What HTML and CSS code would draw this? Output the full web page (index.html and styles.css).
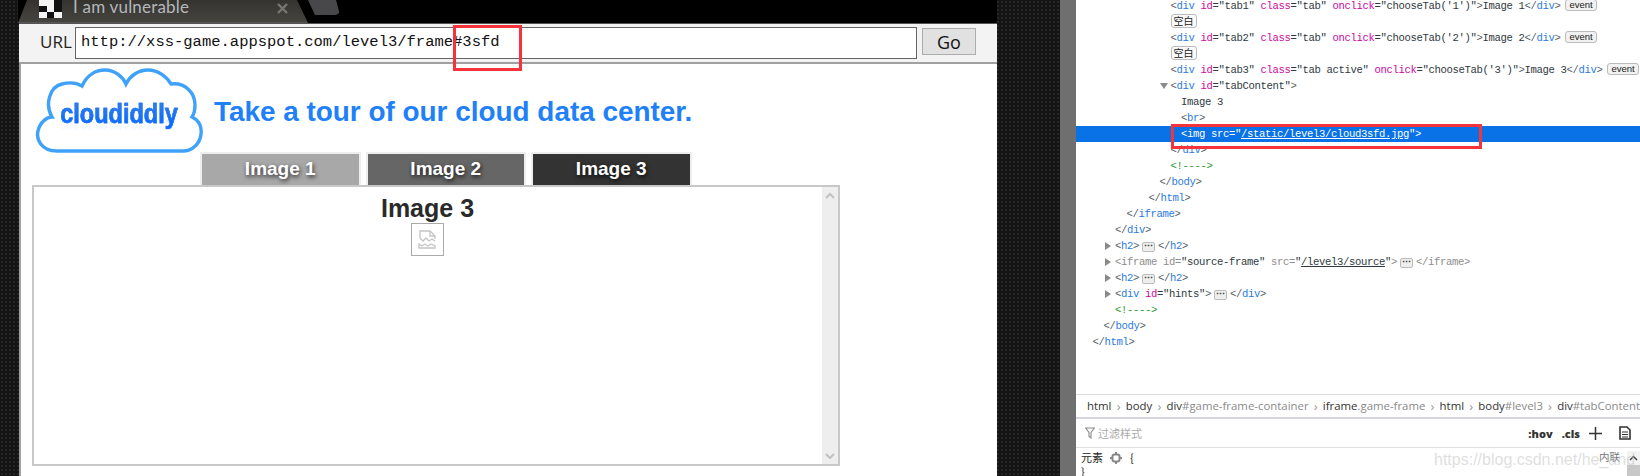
FILE: index.html
```html
<!DOCTYPE html>
<html lang="zh">
<head>
<meta charset="utf-8">
<title>I am vulnerable</title>
<link rel="stylesheet" href="styles.css">
</head>
<body>
<div class="screen">
  <main class="browser">
    <div class="tabstrip">
      <div class="btab">
        <span class="favicon"><i></i><i></i><i class="off"></i><i class="off"></i><i></i><i class="off"></i><i></i><i class="off"></i><i></i></span>
        <span class="btab-title">I am vulnerable</span>
        <svg class="btab-close" width="11" height="11" viewBox="0 0 11 11"><path d="M1 1l9 9M10 1l-9 9" stroke="#77776f" stroke-width="2.4"/></svg>
      </div>
      <div class="newtab"></div>
    </div>
    <div class="urlbar">
      <span class="url-label">URL</span>
      <div class="url-input">http://xss-game.appspot.com/level3/frame#3sfd</div>
      <button class="go">Go</button>
    </div>
    <div class="frame">
      <header class="head">
        <div class="logo">
          <svg class="cloud" width="170" height="90" viewBox="0 0 170 90">
            <path d="M22 84 C6 84 1 72 3 64 C5 55 12 50 17 50 C10 38 14 20 27 17 C35 15 42 16 47 19 C52 8 61 3 70 3 C80 3 88 10 91 17 C95 9 103 3 113 3 C123 3 132 10 136 17 C150 15 160 26 160 38 C160 43 159 47 157 50 C164 53 167 60 166 67 C165 77 157 84 148 84 Z" fill="#fff" stroke="#3ea2fb" stroke-width="3.4"/>
          </svg>
          <span class="logo-text">cloudiddly</span>
        </div>
        <h1 class="title">Take a tour of our cloud data center.</h1>
      </header>
      <nav class="tabs">
        <div class="tab t1">Image 1</div>
        <div class="tab t2">Image 2</div>
        <div class="tab t3">Image 3</div>
      </nav>
      <section class="content">
        <div class="content-body">
          <div class="img-title">Image 3</div>
          <div class="broken">
            <svg width="19" height="19" viewBox="0 0 19 19" fill="none" stroke="#c4c4c4" stroke-width="1.3">
              <path d="M2 8V1h10l5 5v3"/><path d="M12 1v5h5"/><path d="M2 8l3 3 3-3 3 3 3-2 3 2" />
              <path d="M1 14l3 2 3-2 3 2 3-2 4 2v2H1z"/>
            </svg>
          </div>
        </div>
        <div class="vscroll">
          <svg width="10" height="7" viewBox="0 0 10 7"><path d="M1 6l4-4 4 4" fill="none" stroke="#c2c2c2" stroke-width="2"/></svg>
          <svg width="10" height="7" viewBox="0 0 10 7"><path d="M1 1l4 4 4-4" fill="none" stroke="#c2c2c2" stroke-width="2"/></svg>
        </div>
      </section>
    </div>
    <div class="redbox url-mark"></div>
  </main>
  <div class="pattern-gap"></div>
  <div class="gutter"></div>
  <aside class="devtools">
    <div class="tree">
      <div class="ln i3"><span class="p">&lt;</span><span class="t">div</span> <span class="a">id</span>=<span class="v">"tab1"</span> <span class="a">class</span>=<span class="v">"tab"</span> <span class="a">onclick</span>=<span class="v">"chooseTab('1')"</span><span class="p">&gt;</span>Image 1<span class="p">&lt;/</span><span class="t">div</span><span class="p">&gt;</span><span class="pill ev">event</span></div>
      <div class="ln i3"><span class="pill cj">空白</span></div>
      <div class="ln i3"><span class="p">&lt;</span><span class="t">div</span> <span class="a">id</span>=<span class="v">"tab2"</span> <span class="a">class</span>=<span class="v">"tab"</span> <span class="a">onclick</span>=<span class="v">"chooseTab('2')"</span><span class="p">&gt;</span>Image 2<span class="p">&lt;/</span><span class="t">div</span><span class="p">&gt;</span><span class="pill ev">event</span></div>
      <div class="ln i3"><span class="pill cj">空白</span></div>
      <div class="ln i3"><span class="p">&lt;</span><span class="t">div</span> <span class="a">id</span>=<span class="v">"tab3"</span> <span class="a">class</span>=<span class="v">"tab active"</span> <span class="a">onclick</span>=<span class="v">"chooseTab('3')"</span><span class="p">&gt;</span>Image 3<span class="p">&lt;/</span><span class="t">div</span><span class="p">&gt;</span><span class="pill ev">event</span></div>
      <div class="ln i3"><b class="tri down"></b><span class="p">&lt;</span><span class="t">div</span> <span class="a">id</span>=<span class="v">"tabContent"</span><span class="p">&gt;</span></div>
      <div class="ln i4">Image 3</div>
      <div class="ln i4"><span class="p">&lt;</span><span class="t">br</span><span class="p">&gt;</span></div>
      <div class="ln i4 sel">&lt;img src="<u>/static/level3/cloud3sfd.jpg</u>"&gt;</div>
      <div class="ln i3"><span class="p">&lt;/</span><span class="t">div</span><span class="p">&gt;</span></div>
      <div class="ln i3 c">&lt;!----&gt;</div>
      <div class="ln i2b"><span class="p">&lt;/</span><span class="t">body</span><span class="p">&gt;</span></div>
      <div class="ln i2"><span class="p">&lt;/</span><span class="t">html</span><span class="p">&gt;</span></div>
      <div class="ln i1b"><span class="p">&lt;/</span><span class="t">iframe</span><span class="p">&gt;</span></div>
      <div class="ln i1"><span class="p">&lt;/</span><span class="t">div</span><span class="p">&gt;</span></div>
      <div class="ln i1"><b class="tri"></b><span class="p">&lt;</span><span class="t">h2</span><span class="p">&gt;</span><span class="dots">⋯</span><span class="p">&lt;/</span><span class="t">h2</span><span class="p">&gt;</span></div>
      <div class="ln i1 dim"><b class="tri"></b><span class="p">&lt;</span>iframe id=<span class="v">"source-frame"</span> src=<span class="v">"<u>/level3/source</u>"</span><span class="p">&gt;</span><span class="dots">⋯</span><span class="p">&lt;/</span>iframe<span class="p">&gt;</span></div>
      <div class="ln i1"><b class="tri"></b><span class="p">&lt;</span><span class="t">h2</span><span class="p">&gt;</span><span class="dots">⋯</span><span class="p">&lt;/</span><span class="t">h2</span><span class="p">&gt;</span></div>
      <div class="ln i1"><b class="tri"></b><span class="p">&lt;</span><span class="t">div</span> <span class="a">id</span>=<span class="v">"hints"</span><span class="p">&gt;</span><span class="dots">⋯</span><span class="p">&lt;/</span><span class="t">div</span><span class="p">&gt;</span></div>
      <div class="ln i1 c">&lt;!----&gt;</div>
      <div class="ln i0b"><span class="p">&lt;/</span><span class="t">body</span><span class="p">&gt;</span></div>
      <div class="ln i0"><span class="p">&lt;/</span><span class="t">html</span><span class="p">&gt;</span></div>
    </div>
    <div class="crumbs">
      <span>html</span><em>›</em><span>body</span><em>›</em><span>div<small>#game-frame-container</small></span><em>›</em><span>iframe<small>.game-frame</small></span><em>›</em><span>html</span><em>›</em><span>body<small>#level3</small></span><em>›</em><span>div<small>#tabContent</small></span>
    </div>
    <div class="filter">
      <svg width="10" height="12" viewBox="0 0 10 12"><path d="M.7 1h8.600L6 5.500V11L4 9.500V5.500z" fill="none" stroke="#8a8a8a" stroke-width="1.100"/></svg>
      <span class="filter-text">过滤样式</span>
      <span class="filter-tools">
        <b>:hov</b><b>.cls</b>
        <svg width="13" height="13" viewBox="0 0 13 13"><path d="M6.500 0v13M0 6.500h13" stroke="#333" stroke-width="1.500"/></svg>
        <svg width="12" height="14" viewBox="0 0 12 14"><path d="M1 1h7l3 3v9H1z" fill="none" stroke="#333" stroke-width="1.600"/><path d="M3 6h6M3 8.500h6M3 11h6" stroke="#333"/></svg>
      </span>
    </div>
    <div class="styles">
      <div class="rule">
        <div>元素 <svg class="gear" width="12" height="12" viewBox="0 0 12 12"><rect x="2.500" y="2.500" width="7" height="7" rx="2" fill="none" stroke="#888" stroke-width="2"/><path d="M6 0v2M6 10v2M0 6h2M10 6h2" stroke="#888" stroke-width="2"/></svg> {</div>
        <div>}</div>
      </div>
      <span class="inline-tag">内联</span>
      <div class="dscroll"><svg width="9" height="6" viewBox="0 0 9 6"><path d="M1 5l3.500-3.500L8 5" fill="none" stroke="#444" stroke-width="1.500"/></svg><i></i></div>
      <span class="watermark">https://blog.csdn.net/he_and</span>
    </div>
    <div class="redbox sel-mark"></div>
  </aside>
</div>
</body>
</html>
```
FILE: styles.css
```css
* { box-sizing: border-box; }
html, body { margin: 0; height: 100%; overflow: hidden; }
body { font-family: "Liberation Sans", Arial, sans-serif; }

.screen {
  display: flex;
  width: 1640px;
  height: 476px;
  overflow: hidden;
  background-color: #141414;
  background-image: radial-gradient(circle at 2px 2px, #262626 1px, transparent 1.400px);
  background-size: 4px 4px;
}

/* browser-in-browser */
.browser { position: relative; width: 979px; margin-left: 18px; flex: none; display: flex; flex-direction: column; }
.tabstrip { height: 23px; background: #000; display: flex; flex: none; }
.btab {
  width: 290px; height: 23px; background: linear-gradient(#34332f, #45443f);
  clip-path: polygon(0 100%, 9px 0, 279px 0, 290px 100%);
  display: flex; align-items: flex-start; flex: none; position: relative;
  border-bottom: 1px solid #555;
}
.favicon { display: grid; grid-template-columns: repeat(3, 7.500px); grid-auto-rows: 6px; margin: 0 0 0 21px; width: 23px; }
.favicon i { background: #f4f4f4; }
.favicon i.off { background: #111; }
.btab-title { color: #b3b7bb; font: 17px/14px "Lato", "Noto Sans", sans-serif; margin-left: 11px; height: 20px; width: 206px; letter-spacing: .2px; }
.btab-close { margin: 3px 0 0 -2px; }
.newtab { width: 32px; height: 15px; background: #48484a; margin-left: 0; border-radius: 0 0 5px 8px; clip-path: polygon(0 0, 28px 0, 32px 100%, 7px 100%); }

.urlbar {
  height: 41px; flex: none; display: flex; align-items: flex-start;
  background: #f3f3f3; border-bottom: 2px solid #a0a0a0; border-top: 1px solid #555;
  margin-left: 1px; padding: 3px 0 0 21px;
}
.url-label { width: 35px; font: 17px/30px "Open Sans", sans-serif; color: #222; }
.url-input {
  width: 842px; height: 32px; background: #fff; border: 1px solid #666; border-bottom-width: 1.500px;
  font: 15.500px/29px "Liberation Mono", monospace; color: #111; padding-left: 5px;
}
.go {
  width: 54px; height: 27px; margin: 1px 0 0 5px; padding: 0;
  background: #e1e1e1; border: 1px solid #adadad;
  font: 18px/24px "Open Sans", sans-serif; color: #111;
}

.frame { flex: 1; margin-left: 1px; background: #fff; border-left: 2px solid #a0a0a0; padding: 0 0 0 11px; display: flex; flex-direction: column; position: relative; }
.head { height: 88px; display: flex; align-items: flex-start; flex: none; }
.logo { position: relative; width: 170px; height: 88px; margin: 3px 0 0 3px; flex: none; }
.cloud { display: block; }
.logo-text {
  position: absolute; left: -10px; right: -8px; top: 32px; text-align: center;
  font: bold 27px/30px "Liberation Sans", sans-serif; transform: scaleX(.87);
  background: linear-gradient(#2a7cee 25%, #0a6cff 80%); -webkit-background-clip: text; background-clip: text; color: transparent;
  -webkit-text-stroke: .5px #1a6cf0;
  -webkit-box-reflect: below -9px linear-gradient(transparent 62%, rgba(0,0,0,.12));
}
.title { margin: 32px 0 0 9px; font: bold 27.900px/32px "Liberation Sans", sans-serif; color: #2080f8; white-space: nowrap; }

.tabs { display: flex; gap: 5px; margin-left: 168px; height: 33px; flex: none; }
.tab { width: 160.500px; height: 34px; border: 2px solid #eee; border-bottom: 0; color: #fff; font: bold 19px/30px "Liberation Sans", sans-serif; text-align: center; text-shadow: 1px 2px 4px rgba(0,0,0,.75); }
.tab.t1 { background: #a8a8a8; }
.tab.t2 { background: #666; }
.tab.t3 { background: #333; }

.content { width: 808px; height: 281px; border: 2px solid #c8c8c8; background: #fff; display: flex; flex: none; position: relative; }
.content-body { flex: 1; display: flex; flex-direction: column; align-items: center; padding-right: 1px; }
.img-title { font: bold 25px/28px "Liberation Sans", sans-serif; color: #2a2a2a; margin-top: 7px; }
.broken { width: 33px; height: 33px; border: 1px solid #aaa; margin-top: 1px; display: flex; align-items: center; justify-content: center; }
.vscroll { width: 16px; background: #eee; display: flex; flex-direction: column; justify-content: space-between; align-items: center; padding: 5px 0 4px; }
.vscroll svg { display: block; }

.redbox { position: absolute; border: 3px solid #f5333a; pointer-events: none; }
.url-mark { left: 435px; top: 25px; width: 69px; height: 46px; }
.sel-mark { left: 95px; top: 124px; width: 311px; height: 25px; }

.pattern-gap { width: 63px; flex: none; }
.gutter { width: 16px; background: #6f6f6f; flex: none; }

/* devtools */
.devtools { width: 564px; flex: none; background: #fff; position: relative; display: flex; flex-direction: column; overflow: hidden; }
.tree { height: 394px; flex: none; padding-top: 0; margin-top: -2px; font: 10.600px/17px "Liberation Mono", monospace; letter-spacing: -.36px; color: #303942; white-space: nowrap; }
.ln { height: 16px; position: relative; }
.i0 { padding-left: 16.500px; } .i0b { padding-left: 27.500px; }
.i1 { padding-left: 39px; } .i1b { padding-left: 50.500px; }
.i2 { padding-left: 72.500px; } .i2b { padding-left: 83.500px; }
.i3 { padding-left: 94.500px; } .i4 { padding-left: 105px; }
.p { color: #5a5f66; }
.t { color: #2a7ae2; }
.a { color: #c80a9e; }
.v { color: #303942; }
.c { color: #2c9a2c; }
.dim, .dim .p { color: #8d8d8d; }
.ln.sel { background: #0872e6; color: #fff; }
.tri { position: absolute; top: 4px; margin-left: -10px; width: 0; height: 0; border-style: solid; border-width: 4px 0 4px 6px; border-color: transparent transparent transparent #8a8a8a; }
.tri.down { border-width: 6px 4px 0; border-color: #8a8a8a transparent transparent; margin-left: -11px; top: 5px; }
.pill { display: inline-block; border: 1px solid #bbb; border-radius: 3px; background: #f1f1f1; font: 9px/10px "Liberation Sans", sans-serif; letter-spacing: 0; color: #222; padding: 0 2px; height: 12px; vertical-align: 1px; }
.pill.ev { margin-left: 5px; padding: 0 3px; font-size: 9.500px; }
.pill.cj { font: 10px/11px "Noto Sans CJK SC", sans-serif; padding: 0 2px; height: 14px; background: #fafafa; }
.dots { display: inline-block; width: 13px; height: 10px; margin: 0 3px; border: 1px solid #bbb; border-radius: 2px; background: #eee; font: bold 9px/7px "Liberation Sans", sans-serif; letter-spacing: 0; text-align: center; color: #333; vertical-align: 0; }

.crumbs { height: 25px; flex: none; border-top: 1px solid #ddd; border-bottom: 2px solid #d6d6de; padding-left: 11px; display: flex; align-items: center; font: 11.400px/1 "Open Sans", sans-serif; color: #333; white-space: nowrap; margin-top: 2px; }
.crumbs em { font-style: normal; color: #999; width: 19.500px; text-align: center; font-size: 13px; }
.crumbs small { font-size: inherit; color: #8a8a8a; }

.filter { height: 29px; flex: none; border-bottom: 1px solid #e0e0e0; display: flex; align-items: center; padding: 0 9px 0 9px; }
.filter-text { margin-left: 3px; font: 11px/1 "Noto Sans CJK SC", sans-serif; color: #aaa; }
.filter-tools { margin-left: auto; display: flex; align-items: center; gap: 8px; font: bold 11px/1 "Open Sans", sans-serif; color: #333; }
.filter-tools b { margin-right: 1px; }
.filter-tools svg + svg { margin-left: 9px; }

.styles { flex: 1; position: relative; display: flex; font: 11px/14px "Noto Sans CJK SC", sans-serif; color: #222; }
.rule { padding: 2px 0 0 5px; }
.rule div { height: 14px; white-space: nowrap; }
.gear { vertical-align: -2px; margin: 0 5px; }
.inline-tag { position: absolute; right: 20px; top: 2px; font-size: 10.500px; color: #777; }
.dscroll { position: absolute; right: 0; top: 3px; bottom: 0; width: 13px; display: flex; flex-direction: column; align-items: center; background: #f4f4f4; padding-top: 4px; }
.dscroll i { display: block; width: 13px; flex: 1; background: #c8c8c8; margin-top: 4px; }
.watermark { position: absolute; left: 358px; top: 0; font: 16px/24px "Liberation Sans", sans-serif; color: rgba(190,190,190,.5); white-space: nowrap; }
```
